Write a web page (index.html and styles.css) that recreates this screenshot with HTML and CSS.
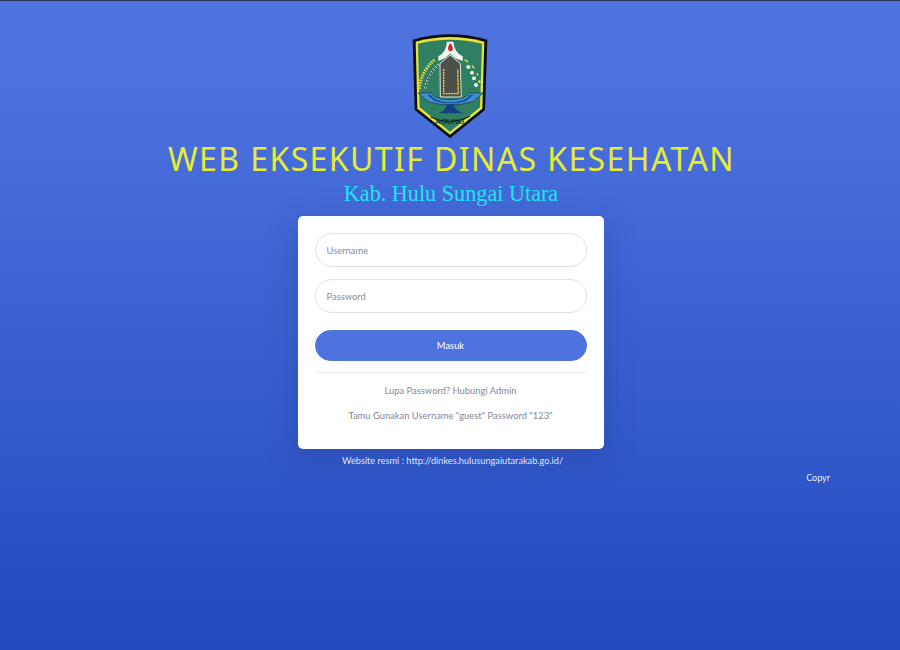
FILE: index.html
```html
<!DOCTYPE html>
<html>
<head>
	<meta http-equiv="Content-Type" content="text/html; charset=utf-8" />
	<title>Web Eksekutif Dinas Kesehatan</title>
	<link rel="stylesheet" href="styles.css">
</head>

<body>
	<div class="halaman">
		<svg class="logo" viewBox="0 0 360 360" width="120" height="120">
			<path d="M68 44 Q125 28 180 28 Q235 28 292 44 L285 255 L180 340 L74 255 Z" fill="#0c0f12"/>
			<path d="M77 50 Q130 36 180 36 Q230 36 283 50 L277 251 L180 329 L82 251 Z" fill="#e6e33a"/>
			<path d="M84 56 Q133 44 180 44 Q227 44 276 56 L270 247 L180 320 L89 247 Z" fill="#2f7f62"/>
			<path d="M145 94 Q168 82 171 50 L190 50 Q193 82 218 94 L218 108 L196 100 L180 86 L164 100 L145 108 Z" fill="#f4f4f0"/>
			<path d="M181 54 Q172 66 175 75 Q181 83 188 75 Q190 66 181 54 Z" fill="#d0252a"/>
			<path d="M150 116 L180 90 L211 116 L214 216 L151 216 Z" fill="#4b5049" stroke="#dfe3dc" stroke-width="3"/>
			<path d="M161 132 L161 206 L205 206 L203 132" fill="none" stroke="#e8dc2c" stroke-width="4" stroke-dasharray="6 2"/>
			<path d="M88 192 Q92 140 134 104" fill="none" stroke="#e5d84a" stroke-width="9" stroke-dasharray="5 3"/>
			<path d="M106 190 Q112 148 146 118" fill="none" stroke="#f0f0ec" stroke-width="6" stroke-dasharray="6 4"/>
			<path d="M106 190 Q112 148 146 118" fill="none" stroke="#15191a" stroke-width="2"/>
			<path d="M224 104 Q250 118 264 152" fill="none" stroke="#d9d64a" stroke-width="5" stroke-dasharray="12 16"/>
			<circle cx="235" cy="126" r="6" fill="#f0f3ea"/>
			<circle cx="246" cy="143" r="6" fill="#f0f3ea"/>
			<circle cx="252" cy="160" r="6" fill="#f0f3ea"/>
			<circle cx="258" cy="180" r="6" fill="#f0f3ea"/>
			<circle cx="268" cy="170" r="4" fill="#e5e04a"/>
			<path d="M84 204 L124 204 Q136 224 180 224 Q226 224 238 204 L280 204 L248 230 L212 238 L150 238 L114 230 Z" fill="#3f8fd2" stroke="#12314f" stroke-width="2"/>
			<path d="M112 210 L122 210 Q136 232 180 232 Q226 232 240 210 L250 210 L228 228 L204 234 L158 234 L134 228 Z" fill="#12508f"/>
			<path d="M170 238 L192 238 Q192 256 222 265 L144 265 Q170 256 170 238 Z" fill="#153f86"/>
			<path d="M122 276 Q180 304 240 274" fill="none" stroke="#10151a" stroke-width="3"/>
			<text class="logo-teks" x="180" y="297" text-anchor="middle">AGUNG</text>
		</svg>

		<h1 class="judul">WEB EKSEKUTIF DINAS KESEHATAN</h1>
		<h2 class="subjudul">Kab. Hulu Sungai Utara</h2>

		<div class="kartu">
			<form class="form-masuk">
				<input class="isian" type="text" placeholder="Username">
				<input class="isian" type="password" placeholder="Password">
				<button class="tombol" type="button">Masuk</button>
			</form>
			<hr class="garis">
			<p class="info">Lupa Password? Hubungi Admin</p>
			<p class="info">Tamu Gunakan Username "guest" Password "123"</p>
		</div>

		<p class="situs">Website resmi : http://dinkes.hulusungaiutarakab.go.id/</p>
		<div class="hak-cipta"><span>Copyr</span></div>
	</div>
</body>
</html>
```

FILE: styles.css
```css
html, body {
	height: 100%;
	margin: 0;
}

body {
	background: linear-gradient(180deg, #4e73df 10%, #224abe 100%);
	font-family: Lato, "Noto Sans", Arial, sans-serif;
	overflow: hidden;
}

.halaman {
	display: flex;
	flex-direction: column;
	align-items: center;
	height: 100%;
	box-sizing: border-box;
	border-top: 1px solid #2b3358;
	padding-top: 24px;
}

.logo {
	display: block;
	flex: none;
	filter: blur(0.4px);
}

.logo-teks {
	font-family: "Liberation Sans", Arial, sans-serif;
	font-size: 24px;
	fill: #10151a;
}

.judul {
	margin: -5px 0 0 3px;
	font-family: "Noto Sans", Arial, sans-serif;
	font-size: 32px;
	line-height: 38px;
	font-weight: 400;
	letter-spacing: 1.4px;
	white-space: nowrap;
	color: #e4ec35;
}

.subjudul {
	margin: 3px 0 0 2px;
	font-family: "Liberation Serif", "Times New Roman", serif;
	font-size: 22.2px;
	line-height: 26px;
	font-weight: 400;
	color: #23e6f2;
}

.kartu {
	width: 306px;
	height: 233px;
	margin: 9px 0 0 1px;
	padding: 17px 17px 0;
	box-sizing: border-box;
	background-color: #ffffff;
	border-radius: 5px;
	box-shadow: 0 8px 32px rgba(34, 50, 110, 0.25);
}

.form-masuk {
	display: flex;
	flex-direction: column;
}

.isian {
	height: 34px;
	margin-bottom: 12px;
	padding: 0 11px;
	box-sizing: border-box;
	border: 1px solid #dfe1ee;
	border-radius: 17px;
	font-family: inherit;
	font-size: 9.4px;
	color: #6e707e;
	outline: none;
}

.isian::placeholder {
	color: #8a8c99;
}

.tombol {
	height: 31px;
	margin-top: 5px;
	border: 1px solid #4e73df;
	border-radius: 16px;
	background-color: #4e73df;
	font-family: inherit;
	font-size: 9.4px;
	color: #ffffff;
}

.garis {
	height: 1px;
	margin: 11px 0 0;
	border: 0;
	background-color: #eceef3;
}

.info {
	margin: 11px 0 0;
	font-size: 9.4px;
	line-height: 13px;
	text-align: center;
	color: #858796;
}

.info + .info {
	margin-top: 12px;
}

.situs {
	margin: 5px 0 0 5px;
	font-size: 9.2px;
	line-height: 14px;
	color: #dfe3f5;
}

.hak-cipta {
	align-self: flex-end;
	margin: 3px 70px 0 0;
	font-size: 9px;
	line-height: 14px;
	color: #e6eaf8;
}
```
